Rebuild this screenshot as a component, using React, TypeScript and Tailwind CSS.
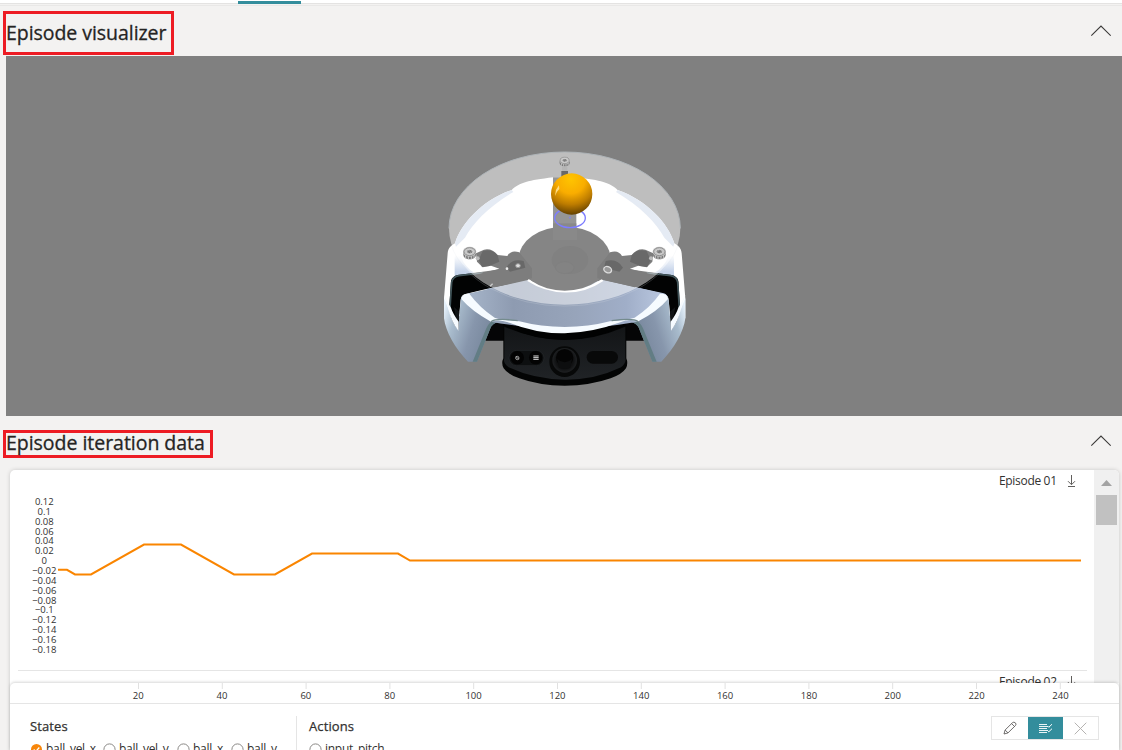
import React from "react";

const yLabels = ["0.12", "0.1", "0.08", "0.06", "0.04", "0.02", "0", "−0.02", "−0.04", "−0.06", "−0.08", "−0.1", "−0.12", "−0.14", "−0.16", "−0.18"];
const xLabels = [20, 40, 60, 80, 100, 120, 140, 160, 180, 200, 220, 240];

function ChevronUp() {
  return (
    <svg width="21" height="12" viewBox="0 0 21 12" fill="none" stroke="#3b3a39" strokeWidth="1.1">
      <path d="M1.3 10.7 11 1 20.7 10.7" />
    </svg>
  );
}

function Download() {
  return (
    <svg width="9" height="13" viewBox="0 0 9 13" fill="none" stroke="#605e5c" strokeWidth="1">
      <path d="M4.5 0v9.5M1 6.2l3.5 3.5L8 6.2M1 11.5h7" />
    </svg>
  );
}

function Screw({ x, y }: { x: number; y: number }) {
  return (
    <g transform={`translate(${x} ${y})`}>
      <path d="M-19 0v9c0 18 38 18 38 0v-9z" fill="#777" />
      <path d="M-12 8v12M-4 10v13M5 10v13M13 8v11" stroke="#c9c9c9" strokeWidth="3" />
      <ellipse rx="20" ry="15" fill="#c5c5c5" />
      <ellipse rx="17" ry="12" fill="none" stroke="#777" strokeWidth="2" />
      <ellipse rx="10" ry="7" fill="#999" stroke="#e4e4e4" strokeWidth="2" />
      <path d="M-5-3l4 7 3-8 4 7" fill="none" stroke="#666" strokeWidth="2" />
    </g>
  );
}

function HalfShell() {
  return (
    <>
      {/* side window */}
      <path d="M39 495 L45 408 Q48 394 65 390 L118 383 L200 372 L290 360 L290 408 L160 430 L88 447 Q75 450 74 465 L65 555 Q45 525 39 495Z" fill="#020303" />
      <path d="M42 490 L47 412 Q50 396 68 392 L140 384" fill="none" stroke="#41555a" strokeWidth="5" />
      <path d="M54 486 L66 553 L70 500Z" fill="#111416" />
      {/* leg */}
      <path d="M150 530H212V587H146Z" fill="#050506" />
      <path d="M74 465 Q76 447 96 450 L170 525 L210 530 Q178 527 165 545 L123 650 L96 650 C58 612 28 558 24 520 L24 460 L39 495 Q48 535 67 555Z" fill="url(#leg)" />
      <path d="M24 450 L36 490 Q48 535 67 557 L68 530 Q50 505 45 488 L40 480 Z" fill="#f6fbff" />
      <path d="M210 529 Q178 527 165 545 L123 650 L110 650 L151 550 Q160 528 180 525Z" fill="#627d84" />
    </>
  );
}

function Scene() {
  return (
    <svg className="block" width="1116" height="360" viewBox="6 56 1116 360">
      <defs>
        <radialGradient id="ball" cx=".48" cy=".14" r=".88">
          <stop offset="0" stopColor="#ffc400" />
          <stop offset=".4" stopColor="#f9ad00" />
          <stop offset=".7" stopColor="#bd7c00" />
          <stop offset="1" stopColor="#5e3d00" />
        </radialGradient>
        <linearGradient id="leg" x1="0" y1=".2" x2="1" y2=".55">
          <stop offset="0" stopColor="#e6f1fb" />
          <stop offset=".2" stopColor="#a9bccd" />
          <stop offset=".5" stopColor="#8796ac" />
          <stop offset="1" stopColor="#6d7d92" />
        </linearGradient>
        <linearGradient id="front" x1="0" x2="1">
          <stop offset="0" stopColor="#a9b8cc" />
          <stop offset=".25" stopColor="#8e9bb1" />
          <stop offset=".55" stopColor="#97a4ba" />
          <stop offset=".8" stopColor="#a0aec8" />
          <stop offset="1" stopColor="#bccae2" />
        </linearGradient>
        <linearGradient id="shell" x1="0" y1="0" x2="0" y2="1">
          <stop offset="0" stopColor="#fff" />
          <stop offset=".2" stopColor="#fff" />
          <stop offset=".55" stopColor="#c6d4ea" />
          <stop offset="1" stopColor="#b6c8df" />
        </linearGradient>
        <linearGradient id="head" x1="0" y1="0" x2="0" y2="1">
          <stop offset="0" stopColor="#131517" />
          <stop offset="1" stopColor="#202326" />
        </linearGradient>
        <radialGradient id="lens">
          <stop offset="0" stopColor="#050505" />
          <stop offset=".7" stopColor="#101112" />
          <stop offset="1" stopColor="#1e2022" />
        </radialGradient>
      </defs>
      <path fill="#808080" d="M6 56h1116v360H6z" />
      <g transform="translate(436 145) scale(.33333)">
        {/* outer shell */}
        <path d="M24 520V460L35 325C36 308 48 300 57 295C75 235 140 165 227 135C252 112 275 107 352 97H420C497 107 520 112 545 135C632 165 697 235 715 295C724 300 736 308 737 325L748 460V520L600 500H170Z" fill="#fff" />
        <path d="M57 295C75 235 140 165 227 135L232 141C160 183 110 235 87 278L60 305ZM715 295C697 235 632 165 545 135L540 141C612 183 662 235 685 278L712 305Z" fill="#cdd7e9" />
        <path d="M56 310L70 305C70 350 100 390 170 405H600C670 390 702 350 702 305L714 310V410L600 440H170L56 392Z" fill="url(#shell)" />
        {/* side frames */}
        <HalfShell />
        <g transform="matrix(-1 0 0 1 772 0)"><HalfShell /></g>
        {/* camera head */}
        <path d="M202 540V640Q195 655 203 670Q215 688 250 700Q310 722 386 722T524 700Q558 688 570 670Q577 655 571 640V540Z" fill="#030404" />
        <path d="M205 545V640Q200 653 218 667Q295 703 386 704T555 667Q572 653 568 640V545Q475 585 386 585T205 545Z" fill="url(#head)" />
        <path d="M202 540Q290 585 386 584T570 540V528H202Z" fill="#010202" />
        <rect x="219" y="616" width="105" height="46" rx="23" fill="#0d0f10" stroke="#26292c" strokeWidth="2" />
        <circle cx="244" cy="638" r="20" fill="#030303" />
        <circle cx="299" cy="638" r="20" fill="#030303" />
        <circle cx="244" cy="639" r="5" fill="none" stroke="#bbb" strokeWidth="2.5" />
        <path d="M240 634l8 9" stroke="#ddd" strokeWidth="2" />
        <path d="M292 633h16M292 638h16M292 643h16" stroke="#ddd" strokeWidth="3" />
        <circle cx="386" cy="650" r="46" fill="#070808" />
        <circle cx="386" cy="646" r="37" fill="url(#lens)" />
        <circle cx="386" cy="638" r="26" fill="#040404" />
        <path d="M364 642q22 20 44 0l-5 26q-17 8-34 0z" fill="#0d0e0f" />
        <rect x="452" y="618" width="94" height="38" rx="19" fill="#080909" />
        {/* front surface */}
        <path d="M78 456Q82 448 95 446L276 405Q325 435 386 437T500 405L680 444Q692 446 694 456L690 463L605 530Q500 549 386 550T165 530Z" fill="url(#front)" />
        <path d="M76 462Q78 445 100 446Q130 487 176 518Q200 526 250 529Q315 546 386 546T522 529Q570 526 596 518Q643 487 672 446Q694 445 696 462Q666 498 607 529Q580 520 553 532Q470 563 386 565T216 532Q188 522 165 530Q108 499 76 462Z" fill="#f6fbff" />
        <path d="M165 530Q180 518 245 527M607 530Q592 518 527 527" fill="none" stroke="#748b8d" strokeWidth="4" />
        <path d="M276 405Q325 437 386 439T500 405" fill="none" stroke="#fff" strokeWidth="7" />
        {/* bowl and mounting arms */}
        <ellipse cx="386" cy="341" rx="138" ry="96" fill="#111" />
        <path d="M250 330Q275 372 290 402H484Q500 370 522 330L500 290H275Z" fill="#111" />
        <ellipse cx="402" cy="345" rx="55" ry="42" fill="#080808" />
        <ellipse cx="386" cy="368" rx="28" ry="18" fill="#0c0c0c" stroke="#050505" strokeWidth="2" />
        <path d="M351 97H421V285H351Z" fill="#303030" />
        <path d="M351 235H421V285H351Z" fill="#181818" />
        <path d="M120 325L144 314Q168 309 185 330L214 333Q225 313 250 322L288 370V400L176 427L118 390L190 371L165 362L140 367L123 350Z" fill="#000" />
        <path d="M652 325L628 314Q604 309 587 330L558 333Q547 313 522 322L484 370V400L596 427L654 390L582 371L607 362L632 367L649 350Z" fill="#000" />
        {/* translucent plate */}
        <ellipse cx="386" cy="250" rx="347" ry="229" fill="#fff" fillOpacity=".49" />
        <path d="M39 250A347 229 0 0 1 733 250" fill="none" stroke="#aeb4b8" strokeWidth="3" />
        <path d="M46 300A347 229 0 0 0 726 300" fill="none" stroke="#e0e5ed" strokeOpacity=".2" strokeWidth="3" />
        <path d="M140 318Q168 309 185 331L190 350L160 363L138 366L128 345ZM632 318Q604 309 587 331L582 350L612 363L634 366L644 345Z" fill="#636363" fillOpacity=".75" />
        <path d="M211 368Q228 338 263 348L268 368L222 380ZM561 368Q544 338 509 348L504 368L550 380Z" fill="#606060" fillOpacity=".7" />
        <path d="M378 66h16v16h-16z" fill="#b5b5b5" />
        <path d="M376 78h20v18h-20z" fill="#686868" />
        <g transform="translate(0 -2) translate(386 48) scale(.8) translate(-386 -48)"><Screw x={386} y={48} /></g>
        <Screw x={101} y={320} />
        <Screw x={670} y={320} />
        <circle cx="125" cy="340" r="6" fill="#bbb" />
        <circle cx="645" cy="340" r="6" fill="#bbb" />
        <circle cx="213" cy="371" r="4" fill="#eee" />
        <ellipse cx="246" cy="362" rx="7" ry="6" fill="#ddd" stroke="#999" strokeWidth="3" />
        <ellipse cx="515" cy="374" rx="12" ry="9" fill="#999" stroke="#ddd" strokeWidth="4" transform="rotate(25 515 374)" />
        <path d="M162 424l8-8" stroke="#ccc" strokeWidth="4" />
        <ellipse cx="402" cy="219" rx="46" ry="29" fill="none" stroke="#7d7dff" strokeWidth="4" />
        <circle cx="402" cy="218" r="2.5" fill="#7d7dff" />
        <circle cx="407" cy="147" r="62" fill="url(#ball)" />
        <path d="M369 121L360 134L357 153L363 140L370 132Z" fill="#ffdc82" />
      </g>
    </svg>
  );
}

function EpisodeChart() {
  return (
    <svg className="block" width="1084" height="200" viewBox="10 470 1084 200">
      <g fill="#323130" fontFamily="'Open Sans', sans-serif" fontSize="9.5" textAnchor="middle">
        {yLabels.map((label, i) => (
          <text key={label} x="44.3" y={505 + i * 9.86}>{label}</text>
        ))}
      </g>
      <path d="M58 569.8H67L75 574.4H91L144 544.6H181L234 574.4H275L312 553.6H398L410 560.5H1081" fill="none" stroke="#fa8500" strokeWidth="2" />
    </svg>
  );
}

function EpisodeTitle({ name }: { name: string }) {
  return (
    <div className="flex items-center gap-[11px] text-xs leading-4 tracking-[-0.32px] text-[#323130]">
      <span className="w-[57px] whitespace-nowrap">{name}</span>
      <Download />
    </div>
  );
}

function Radio({ label, checked, width }: { label: string; checked?: boolean; width: string }) {
  return (
    <div className={`flex items-center gap-[3px] ${width}`}>
      <svg className="shrink-0" width="13" height="13" viewBox="0 0 13 13" fill="none">
        {checked ? (
          <>
            <circle cx="6.5" cy="6.5" r="5.5" fill="#f7860b" />
            <path d="m3.7 6.5 2 2 3.6-4" stroke="#fff" strokeWidth="1.3" />
          </>
        ) : (
          <circle cx="6.5" cy="6.5" r="5.6" stroke="#8a8886" />
        )}
      </svg>
      <span className="whitespace-nowrap text-xs leading-4 tracking-[-0.28px]">{label}</span>
    </div>
  );
}

export default function App() {
  return (
    <div className="flex h-[750px] w-[1122px] flex-col overflow-hidden bg-[#f3f2f1] font-['Open_Sans',sans-serif] text-[#252423]">
      <div className="h-[6px] shrink-0 border-b border-[#e9e8e7]">
        <div className="h-[4px] border-b border-[#e4e3e2] bg-white pt-px">
          <div className="ml-[238px] h-[3px] w-[63px] bg-[#338d9c]" />
        </div>
      </div>

      <header className="flex h-[50px] shrink-0 items-start justify-between pl-[3px] pr-[11px] pt-[5px]">
        <h2 className="flex h-[44px] w-[171px] items-center whitespace-nowrap border-[3px] border-[#ed1c24] text-[19.5px] tracking-[-0.05px] [-webkit-text-stroke:0.3px_#252423]">Episode visualizer</h2>
        <div className="pt-[14px]"><ChevronUp /></div>
      </header>

      <div className="h-[360px] shrink-0 pl-[6px]"><Scene /></div>

      <header className="flex h-[54px] shrink-0 items-start justify-between pl-[3px] pr-[11px] pt-[14px]">
        <h2 className="flex h-[28px] w-[210px] items-center whitespace-nowrap border-[3px] border-[#ed1c24] pb-[2px] text-[19.5px] leading-5 tracking-[-0.03px] [-webkit-text-stroke:0.3px_#252423]">Episode iteration data</h2>
        <div className="pt-[5px]"><ChevronUp /></div>
      </header>

      <main className="ml-[10px] flex h-[300px] w-[1109px] shrink-0 flex-col rounded-t-[5px] bg-white shadow-[0_0_4px_rgba(0,0,0,0.18)]">
        <section className="flex h-[213px] shrink-0 overflow-hidden">
          <div className="w-[1084px]">
            <div className="relative">
              <EpisodeChart />
              <div className="absolute right-[18px] top-[3px]"><EpisodeTitle name="Episode 01" /></div>
            </div>
            <div className="ml-[8px] w-[1069px] border-t border-[#e5e5e5]" />
            <div className="flex justify-end pr-[18px] pt-[3px]"><EpisodeTitle name="Episode 02" /></div>
          </div>
          <div className="flex w-[25px] flex-col rounded-tr-[5px] bg-[#f0f0f0] pl-[2px] pt-[10px]">
            <svg className="ml-[5px] block" width="11" height="6" viewBox="0 0 11 6"><path d="M0 6 5.5 0 11 6Z" fill="#a3a3a3" /></svg>
            <div className="mt-[9px] h-[30px] w-[21px] bg-[#c1c1c1]" />
          </div>
        </section>

        <footer className="z-10 h-[67px] overflow-hidden rounded-t-[5px] bg-white shadow-[0_-1px_3px_rgba(0,0,0,0.16)]">
          <svg className="block border-b border-[#e5e5e5]" width="1109" height="21" viewBox="10 683 1109 21" preserveAspectRatio="xMinYMin slice">
            <g fontFamily="'Open Sans', sans-serif" fontSize="9.5" textAnchor="middle" fill="#323130">
              {xLabels.map((value, i) => (
                <g key={value}>
                  <path d={`M${138.5 + i * 83.8} 683v6`} stroke="#e1e1e1" />
                  <text x={138.2 + i * 83.84} y="699">{value}</text>
                </g>
              ))}
            </g>
          </svg>
          <div className="flex justify-between pl-[20px] pr-[20px] pt-[12px] text-[#323130]">
            <div className="flex">
              <div className="h-[60px] w-[267px] border-r border-[#e5e5e5]">
                <h3 className="text-[13px] leading-5 tracking-[0.1px] [-webkit-text-stroke:0.25px_#323130]">States</h3>
                <div className="mt-[5px] flex">
                  <Radio label="ball_vel_x" checked width="w-[73px]" />
                  <Radio label="ball_vel_y" width="w-[74px]" />
                  <Radio label="ball_x" width="w-[54px]" />
                  <Radio label="ball_y" width="w-[54px]" />
                </div>
              </div>
              <div className="pl-[12px]">
                <h3 className="text-[13px] leading-5 tracking-[0.1px] [-webkit-text-stroke:0.25px_#323130]">Actions</h3>
                <div className="mt-[5px]"><Radio label="input_pitch" width="w-[90px]" /></div>
              </div>
            </div>
            <div className="flex h-[24px] w-[108px] border border-[#e5e5e5]">
              <div className="flex w-[36px] items-center justify-center">
                <svg width="14" height="14" viewBox="0 0 14 14" fill="none" stroke="#605e5c" strokeWidth=".9"><path d="m1 13 1.1-4 7.4-7.3Q10.8.5 12.3 1.8t.1 2.8L5 11.9ZM2.1 9 5 11.9M8.6 2.6l2.9 2.9" /></svg>
              </div>
              <div className="flex w-[35px] items-center justify-center bg-[#338d9c]">
                <svg width="15" height="11" viewBox="0 0 15 11" fill="none" stroke="#fff"><path d="M1 1.5h8M1 3.5h9M1 5.5h8M1 7.5h9M1 9.5h8" strokeWidth=".9" /><path d="m9.5 3 1.3 1.3L14 1.2M9.5 7.5l1.3 1.3L14 5.7" /></svg>
              </div>
              <div className="flex w-[35px] items-center justify-center">
                <svg width="13" height="13" viewBox="0 0 13 13" stroke="#b5b3b1"><path d="m.7.7 11.6 11.6M12.3.7.7 12.3" /></svg>
              </div>
            </div>
          </div>
        </footer>
      </main>
    </div>
  );
}
